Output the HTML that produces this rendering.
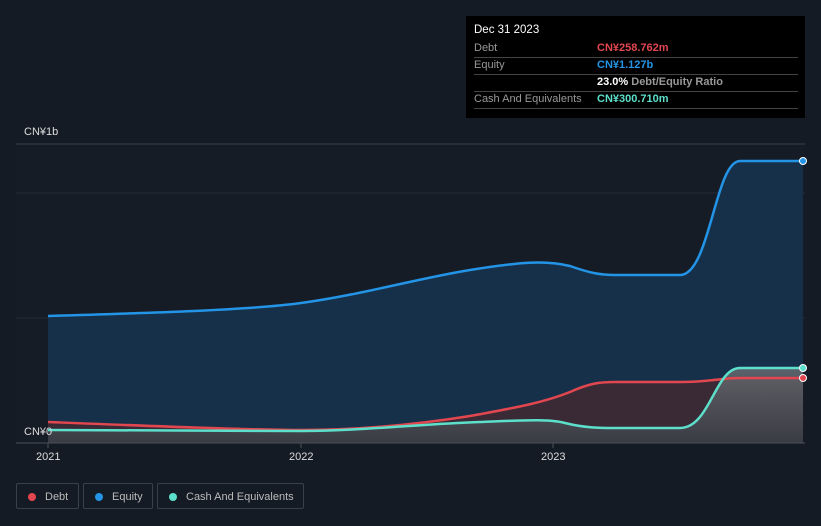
<!DOCTYPE html><html><head><style>
body{margin:0;width:821px;height:526px;background:#151b24;font-family:"Liberation Sans",sans-serif;overflow:hidden;position:relative}
.tt{position:absolute;left:466px;top:16px;width:339px;height:102px;background:#000;font-size:11px}
.r{position:absolute;left:8px;width:324px;border-bottom:1px solid #444;height:17px;line-height:17px;color:#999}
.r span{position:absolute;left:123px;font-weight:bold}
.lg{position:absolute;top:483px;height:26px;border:1px solid #3a4049;border-radius:2px;color:#bbb;font-size:11px;line-height:26px;box-sizing:border-box}
.lg i{position:absolute;left:11px;top:9px;width:8px;height:8px;border-radius:50%}
</style></head><body>
<svg width="821" height="526" style="position:absolute;left:0;top:0">
<defs><linearGradient id="g" x1="0" y1="0" x2="0" y2="1"><stop offset="0" stop-color="#6b6f73" stop-opacity=".8"/><stop offset="1" stop-color="#3a4048" stop-opacity=".8"/></linearGradient></defs>
<rect x="16" y="144" width="789" height="299" fill="#161c26"/>
<line x1="16" y1="144" x2="805" y2="144" stroke="#3a4049"/>
<line x1="16" y1="193" x2="805" y2="193" stroke="#262d37"/>
<line x1="16" y1="318" x2="805" y2="318" stroke="#262d37"/>
<path d="M48,316 C150,313 250,310 301,303 C360,295 420,278 470,270 C520,262 545,260 570,266 C590,273 600,275 615,275 L680,275 C710,275 715,161 740,161 L803,161 L803,443 L48,443Z" fill="#163049"/>
<path d="M48,422 C150,426 250,430 301,430 C360,430 420,424 470,416 C520,407 545,402 570,392 C590,383 600,382 615,382 L680,382 C710,382 720,378 740,378 L803,378 L803,443 L48,443Z" fill="#3a2a36"/>
<path d="M48,430 L301,431 C360,431 420,424 480,422 C530,420 550,419 565,423 C585,428 600,428 615,428 L680,428 C710,428 715,368 740,368 L803,368 L803,443 L48,443Z" fill="url(#g)"/>
<path d="M48,316 C150,313 250,310 301,303 C360,295 420,278 470,270 C520,262 545,260 570,266 C590,273 600,275 615,275 L680,275 C710,275 715,161 740,161 L803,161" fill="none" stroke="#2394e6" stroke-width="2.5"/>
<path d="M48,422 C150,426 250,430 301,430 C360,430 420,424 470,416 C520,407 545,402 570,392 C590,383 600,382 615,382 L680,382 C710,382 720,378 740,378 L803,378" fill="none" stroke="#e2474f" stroke-width="2.5"/>
<path d="M48,430 L301,431 C360,431 420,424 480,422 C530,420 550,419 565,423 C585,428 600,428 615,428 L680,428 C710,428 715,368 740,368 L803,368" fill="none" stroke="#5ce0cb" stroke-width="2.5"/>
<line x1="16" y1="443" x2="805" y2="443" stroke="#4a5059"/>
<line x1="48" y1="443" x2="48" y2="448" stroke="#4a5059"/><line x1="301" y1="443" x2="301" y2="448" stroke="#4a5059"/><line x1="553" y1="443" x2="553" y2="448" stroke="#4a5059"/>
<circle cx="803" cy="161" r="3.5" fill="#2394e6" stroke="#fff"/>
<circle cx="803" cy="368" r="3.5" fill="#5ce0cb" stroke="#fff"/>
<circle cx="803" cy="378" r="3.5" fill="#e2474f" stroke="#fff"/>
<g font-size="11" fill="#ddd" font-family="Liberation Sans">
<text x="24" y="135">CN¥1b</text><text x="24" y="435">CN¥0</text>
<text x="36" y="460">2021</text><text x="289" y="460">2022</text><text x="541" y="460">2023</text></g>
</svg>
<div class="tt">
<div style="position:absolute;left:8px;top:8px;color:#fff;font-size:11.5px">Dec 31 2023</div>
<div class="r" style="top:24px">Debt<span style="color:#e2474f">CN¥258.762m</span></div>
<div class="r" style="top:41px">Equity<span style="color:#2394e6">CN¥1.127b</span></div>
<div class="r" style="top:58px"><span style="color:#fff">23.0% <b style="color:#999">Debt/Equity Ratio</b></span></div>
<div class="r" style="top:75px">Cash And Equivalents<span style="color:#5ce0cb">CN¥300.710m</span></div>
</div>
<div class="lg" style="left:16px;width:63px"><i style="background:#e2474f"></i><span style="position:absolute;left:28px">Debt</span></div>
<div class="lg" style="left:83px;width:70px"><i style="background:#2394e6"></i><span style="position:absolute;left:28px">Equity</span></div>
<div class="lg" style="left:157px;width:147px"><i style="background:#5ce0cb"></i><span style="position:absolute;left:28px">Cash And Equivalents</span></div>
</body></html>
